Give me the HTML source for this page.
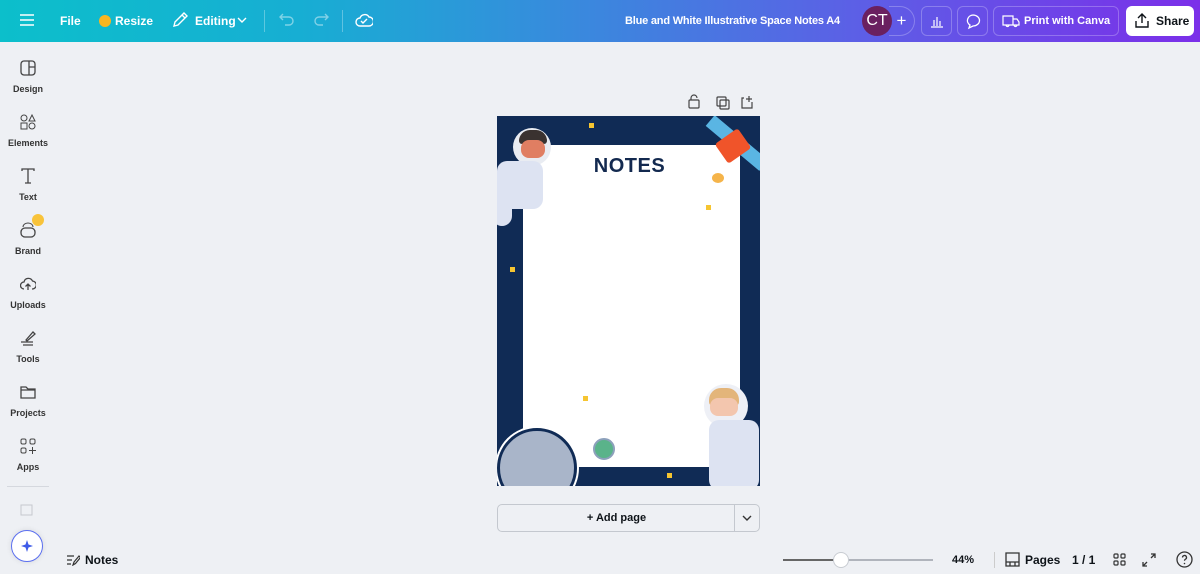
<!DOCTYPE html>
<html><head><meta charset="utf-8"><style>
*{margin:0;padding:0;box-sizing:border-box}
body{width:1200px;height:574px;overflow:hidden;background:#eef0f4;font-family:"Liberation Sans",sans-serif;position:relative;color:#0e1318}
.top{position:absolute;left:0;top:0;width:1200px;height:42px;background:linear-gradient(90deg,#0cbfcb 0%,#17aed3 25%,#3c86de 50%,#5d5ee6 72%,#7b2fe9 100%);color:#fff;font-weight:bold;font-size:12px}
.top>*{position:absolute}
.side{position:absolute;left:0;top:42px;width:56px;height:532px;background:#eef0f4}
.si{position:absolute;left:0;width:56px;text-align:center;font-size:9px;color:#333;font-weight:bold}
.si svg{display:block;margin:0 auto 8px}
.btn{border:1px solid rgba(255,255,255,.25);border-radius:6px;height:30px;top:6px}
</style></head><body>
<div class="top">
  <svg style="left:20px;top:14px" width="14" height="12"><path d="M0 1h14M0 6h14M0 11h14" stroke="#fff" stroke-width="1.5"/></svg>
  <span style="left:60px;top:14px">File</span>
  <span style="left:99px;top:15px;width:12px;height:12px;border-radius:50%;background:#f8b620"></span>
  <span style="left:115px;top:14px">Resize</span>
  <svg style="left:172px;top:12px" width="16" height="16"><path d="M2 14l1-4 9-9 3 3-9 9z M10 3l3 3" stroke="#fff" fill="none" stroke-width="1.4"/></svg>
  <span style="left:195px;top:14px">Editing</span>
  <svg style="left:237px;top:17px" width="10" height="7"><path d="M1 1l4 4 4-4" stroke="#fff" fill="none" stroke-width="1.4"/></svg>
  <span style="left:264px;top:10px;width:1px;height:22px;background:rgba(255,255,255,.3)"></span>
  <svg style="left:279px;top:13px" width="16" height="14"><path d="M4 1L1 4l3 3M1 4h9a4 4 0 010 8H6" stroke="rgba(255,255,255,.45)" fill="none" stroke-width="1.4"/></svg>
  <svg style="left:313px;top:13px" width="16" height="14"><path d="M12 1l3 3-3 3M15 4H6a4 4 0 000 8h4" stroke="rgba(255,255,255,.45)" fill="none" stroke-width="1.4"/></svg>
  <span style="left:342px;top:10px;width:1px;height:22px;background:rgba(255,255,255,.3)"></span>
  <svg style="left:355px;top:13px" width="18" height="14"><path d="M5 13a4 4 0 010-8 5 5 0 019-1 4 4 0 010 9z M6 8l2 2 4-4" stroke="#fff" fill="none" stroke-width="1.4"/></svg>
  <span style="left:625px;top:15px;font-size:11px;letter-spacing:-0.2px">Blue and White Illustrative Space Notes A4</span>
  <span style="left:889px;top:6px;width:26px;height:30px;border:1px solid rgba(255,255,255,.25);border-left:none;border-radius:0 15px 15px 0;text-align:center;line-height:27px;font-size:17px;font-weight:normal">+</span>
  <span style="left:862px;top:6px;width:30px;height:30px;border-radius:50%;background:#6a2060;font-size:16px;font-weight:normal;text-align:center;line-height:30px">CT</span>
  <span class="btn" style="left:921px;width:31px"><svg style="position:absolute;left:8px;top:8px" width="14" height="13"><path d="M1 12h12M4 11V5M7 11V2M10 11V6" stroke="#fff" stroke-width="1.2"/></svg></span>
  <span class="btn" style="left:957px;width:31px"><svg style="position:absolute;left:7px;top:7px" width="16" height="16"><path d="M8 1a6.5 5.5 0 110 11L4 14l1-3A6 5.5 0 018 1z" stroke="#fff" fill="none" stroke-width="1.3"/></svg></span>
  <span class="btn" style="left:993px;width:126px"><svg style="position:absolute;left:8px;top:8px" width="18" height="14"><path d="M1 1h10v9H1zM11 4h4l2 3v3h-6M4 10a1.5 1.5 0 103 0M12 10a1.5 1.5 0 103 0" stroke="#fff" fill="none" stroke-width="1.2"/></svg><span style="position:absolute;left:30px;top:8px;font-size:11px">Print with Canva</span></span>
  <span style="left:1126px;top:6px;width:68px;height:30px;background:#fff;border-radius:6px;color:#0e1318"><svg style="position:absolute;left:8px;top:6px" width="16" height="17"><path d="M8 11V2M4 6l4-4 4 4M2 9v6h12V9" stroke="#0e1318" fill="none" stroke-width="1.4"/></svg><span style="position:absolute;left:30px;top:8px;font-size:12px">Share</span></span>
</div>
<div class="side">
  <div class="si" style="top:18px"><svg width="16" height="16"><rect x="1" y="1" width="14" height="14" rx="3" stroke="#444" fill="none" stroke-width="1.3"/><path d="M9 1v14M9 7h6" stroke="#444" stroke-width="1.3"/></svg>Design</div>
  <div class="si" style="top:72px"><svg width="16" height="16"><circle cx="4" cy="4" r="3" stroke="#444" fill="none"/><path d="M12 1l3 6H9z" stroke="#444" fill="none"/><rect x="1" y="9" width="6" height="6" stroke="#444" fill="none"/><circle cx="12" cy="12" r="3" stroke="#444" fill="none"/></svg>Elements</div>
  <div class="si" style="top:126px"><svg width="16" height="16"><path d="M2 3V1h12v2M8 1v14M5 15h6" stroke="#444" fill="none" stroke-width="1.3"/></svg>Text</div>
  <div class="si" style="top:180px"><svg width="16" height="16"><rect x="1" y="6" width="14" height="9" rx="4" stroke="#444" fill="none" stroke-width="1.3"/><path d="M3 5a5 4 0 0110 0" stroke="#444" fill="none"/></svg>Brand</div>
  <span style="position:absolute;left:32px;top:172px;width:12px;height:12px;border-radius:50%;background:#f8c33a"></span>
  <div class="si" style="top:234px"><svg width="16" height="16"><path d="M4 13a3.5 3.5 0 010-7 4.5 4.5 0 018.5-1A3.5 3.5 0 0112 13M8 14V8M5.5 10.5L8 8l2.5 2.5" stroke="#444" fill="none" stroke-width="1.3"/></svg>Uploads</div>
  <div class="si" style="top:288px"><svg width="16" height="16"><path d="M6 10l7-8 2 2-8 7zM1 12h12M3 15h10" stroke="#444" fill="none" stroke-width="1.3"/></svg>Tools</div>
  <div class="si" style="top:342px"><svg width="16" height="16"><path d="M1 3h5l2 2h7v9H1z M1 6h14" stroke="#444" fill="none" stroke-width="1.3"/></svg>Projects</div>
  <div class="si" style="top:396px"><svg width="16" height="16"><rect x="1" y="1" width="5" height="5" rx="1.5" stroke="#444" fill="none"/><rect x="10" y="1" width="5" height="5" rx="1.5" stroke="#444" fill="none"/><rect x="1" y="10" width="5" height="5" rx="1.5" stroke="#444" fill="none"/><path d="M12.5 9v7M9 12.5h7" stroke="#444"/></svg>Apps</div>
  <span style="position:absolute;left:7px;top:444px;width:42px;height:1px;background:#d5d8de"></span>
  <svg style="position:absolute;left:20px;top:461px" width="14" height="13"><rect x="1" y="2" width="11" height="10" stroke="#c5c8ce" fill="none"/></svg>
  <span style="position:absolute;left:11px;top:488px;width:32px;height:32px;border-radius:50%;background:#fff;border:1.5px solid #5b6ff0;box-shadow:0 0 6px rgba(0,0,0,.1)"><svg style="position:absolute;left:7px;top:7px" width="16" height="16"><path d="M8 2l1.5 4.5L14 8l-4.5 1.5L8 14l-1.5-4.5L2 8l4.5-1.5z" fill="#3e5be8"/></svg></span>
</div>
<svg style="position:absolute;left:687px;top:94px" width="70" height="16"><g stroke="#444" fill="none" stroke-width="1.2"><rect x="2" y="6" width="10" height="8" rx="1"/><path d="M4 6V4a3 3 0 016 0"/><rect x="30" y="3" width="9" height="9" rx="1"/><rect x="33" y="6" width="9" height="9" rx="1"/><path d="M57 4h-2v10h10V8M62 2v6M59 5h6"/></g></svg>
<div style="position:absolute;left:497px;top:116px;width:263px;height:370px;background:#102b55;overflow:hidden">
  <div style="position:absolute;left:26px;top:29px;width:217px;height:322px;background:#fff"></div>
  <div style="position:absolute;left:0;width:263px;text-align:center;top:39px;padding-left:2px"><span style="font-size:20px;font-weight:bold;color:#13294f;letter-spacing:0.5px">NOTES</span></div>
  <div style="position:absolute;left:16px;top:12px;width:38px;height:38px;border-radius:50%;background:#e9ecf2"></div>
  <div style="position:absolute;left:22px;top:14px;width:28px;height:14px;border-radius:14px 14px 4px 4px;background:#3a3230"></div>
  <div style="position:absolute;left:24px;top:24px;width:24px;height:18px;border-radius:8px;background:#e07e62"></div>
  <div style="position:absolute;left:0;top:45px;width:46px;height:48px;border-radius:10px;background:#dde3f2"></div>
  <div style="position:absolute;left:-5px;top:80px;width:20px;height:30px;border-radius:10px;background:#dde3f2"></div>
  <div style="position:absolute;left:205px;top:20px;width:70px;height:14px;background:#5ab5e3;transform:rotate(40deg)"></div>
  <div style="position:absolute;left:222px;top:18px;width:28px;height:24px;background:#f0542a;transform:rotate(-35deg);border-radius:3px"></div>
  <div style="position:absolute;left:215px;top:57px;width:12px;height:10px;border-radius:50%;background:#f5b44a"></div>
  <div style="position:absolute;left:0;top:312px;width:80px;height:80px;border-radius:50%;background:#a9b5c9;border:3px solid #102b55;box-shadow:0 0 0 2px #fff"></div>
  <div style="position:absolute;left:96px;top:322px;width:22px;height:22px;border-radius:50%;background:#5ab38a;border:2px solid #8ca0bb"></div>
  <div style="position:absolute;left:207px;top:268px;width:44px;height:44px;border-radius:50%;background:#eef0f6"></div>
  <div style="position:absolute;left:212px;top:272px;width:30px;height:18px;border-radius:12px 12px 4px 4px;background:#e3b57a"></div>
  <div style="position:absolute;left:213px;top:282px;width:28px;height:18px;border-radius:8px;background:#f3c6ae"></div>
  <div style="position:absolute;left:212px;top:304px;width:50px;height:70px;border-radius:10px;background:#dde3f2"></div>
  <div style="position:absolute;left:92px;top:7px;width:5px;height:5px;background:#f6c531"></div>
  <div style="position:absolute;left:209px;top:89px;width:5px;height:5px;background:#f6c531"></div>
  <div style="position:absolute;left:13px;top:151px;width:5px;height:5px;background:#f6c531"></div>
  <div style="position:absolute;left:86px;top:280px;width:5px;height:5px;background:#f6c531"></div>
  <div style="position:absolute;left:170px;top:357px;width:5px;height:5px;background:#f6c531"></div>
</div>
<div style="position:absolute;left:497px;top:504px;width:263px;height:28px;border:1px solid #c4c8cf;border-radius:5px;background:#eef0f4">
  <span style="position:absolute;left:0;width:237px;text-align:center;top:7px;font-size:11px;font-weight:bold">+ Add page</span>
  <span style="position:absolute;left:236px;top:0;width:1px;height:26px;background:#c4c8cf"></span>
  <svg style="position:absolute;left:244px;top:10px" width="10" height="7"><path d="M1 1l4 4 4-4" stroke="#333" fill="none" stroke-width="1.4"/></svg>
</div>
<svg style="position:absolute;left:66px;top:554px" width="14" height="12"><path d="M1 2h7M1 6h5M1 10h4M7 11l1-3 5-6 1.5 1.5-5 6z" stroke="#333" fill="none" stroke-width="1.2"/></svg>
<span style="position:absolute;left:85px;top:553px;font-size:12px;font-weight:bold">Notes</span>
<span style="position:absolute;left:783px;top:559px;width:150px;height:2px;background:#b0b4bc"></span>
<span style="position:absolute;left:783px;top:559px;width:55px;height:2px;background:#666"></span>
<span style="position:absolute;left:833px;top:552px;width:16px;height:16px;border-radius:50%;background:#fff;border:1px solid #c8ccd2"></span>
<span style="position:absolute;left:952px;top:554px;font-size:11px;font-weight:bold">44%</span>
<span style="position:absolute;left:994px;top:552px;width:1px;height:16px;background:#ccc"></span>
<svg style="position:absolute;left:1005px;top:552px" width="15" height="15"><path d="M1 1h13v9H1zM1 10v4h13v-4M5 10v4M10 10v4" stroke="#333" fill="none" stroke-width="1.3"/></svg>
<span style="position:absolute;left:1025px;top:553px;font-size:12px;font-weight:bold">Pages</span>
<span style="position:absolute;left:1072px;top:553px;font-size:12px;font-weight:bold">1 / 1</span>
<svg style="position:absolute;left:1113px;top:553px" width="13" height="13"><g stroke="#333" fill="none" stroke-width="1.2"><rect x="1" y="1" width="4" height="4" rx="1"/><rect x="8" y="1" width="4" height="4" rx="1"/><rect x="1" y="8" width="4" height="4" rx="1"/><rect x="8" y="8" width="4" height="4" rx="1"/></g></svg>
<svg style="position:absolute;left:1142px;top:553px" width="14" height="14"><path d="M9 1h4v4M13 1L9 5M5 13H1V9M1 13l4-4" stroke="#333" fill="none" stroke-width="1.3"/></svg>
<svg style="position:absolute;left:1176px;top:551px" width="17" height="17"><circle cx="8.5" cy="8.5" r="7.5" stroke="#333" fill="none" stroke-width="1.3"/><path d="M6.5 6.5a2 2 0 113 1.7c-.8.4-1 .8-1 1.6" stroke="#333" fill="none" stroke-width="1.3"/><circle cx="8.5" cy="12.5" r=".8" fill="#333"/></svg>
</body></html>
